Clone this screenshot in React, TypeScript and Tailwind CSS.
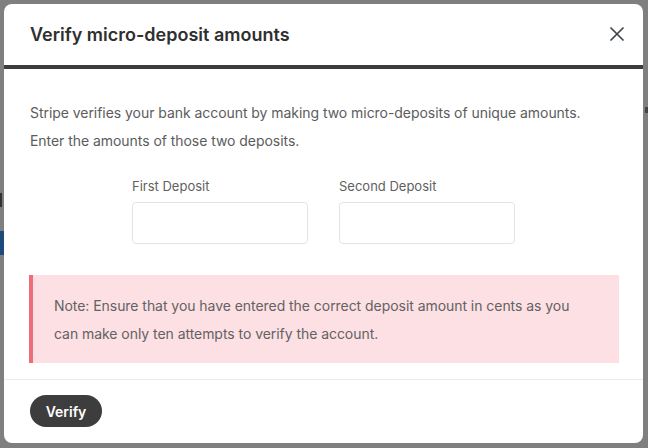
import React from "react";

export default function App() {
  return (
    <div
      className="relative w-[648px] h-[448px] bg-[#7f7f7f] overflow-hidden p-[4px]"
      style={{ fontFamily: "Inter, 'Noto Sans', sans-serif" }}
    >
      {/* underlying page bits peeking through */}
      <span className="absolute left-0 top-[193px] w-[2px] h-[14px] bg-[#333]" />
      <span className="absolute left-0 top-[231px] w-[4px] h-[24px] bg-[#1c4a7a]" />
      <span className="absolute right-0 top-[107px] w-[3px] h-[6px] bg-[#444]" />

      <div className="relative w-[639px] h-[439px] bg-white rounded-[8px] flex flex-col overflow-hidden">
        {/* header */}
        <div className="h-[61px] flex items-center justify-between pl-[26px] pr-[19px] pb-[1px]">
          <h2 className="text-[18px] font-semibold text-[#2f2f2f]">
            Verify micro-deposit amounts
          </h2>
          <button className="w-[14px] h-[14px] flex items-center justify-center">
            <svg width="14" height="14" viewBox="0 0 14 14" fill="none">
              <path d="M1 1L13 13M13 1L1 13" stroke="#3f4448" strokeWidth="1.7" strokeLinecap="round" />
            </svg>
          </button>
        </div>
        <div className="h-[4px] bg-[#3d3d3d]" />

        {/* body */}
        <div className="px-[26px] pt-[30px] pb-[16px]">
          <p className="text-[14px] leading-[28px] text-[#5c5c5c] tracking-[-0.05px]">
            Stripe verifies your bank account by making two micro-deposits of unique amounts.
            <br />
            Enter the amounts of those two deposits.
          </p>

          <div className="flex justify-center gap-[31px] mt-[21px]">
            <div className="flex flex-col">
              <label className="text-[13px] leading-[20px] text-[#5f5f5f]">First Deposit</label>
              <input className="mt-[6px] w-[176px] h-[42px] border border-[#e3e3e3] rounded-[4px] outline-none" />
            </div>
            <div className="flex flex-col">
              <label className="text-[13px] leading-[20px] text-[#5f5f5f]">Second Deposit</label>
              <input className="mt-[6px] w-[176px] h-[42px] border border-[#e3e3e3] rounded-[4px] outline-none" />
            </div>
          </div>

          <div className="mt-[31px] ml-[-1px] mr-[-2px] bg-[#fde0e4] border-l-[4px] border-[#ef6d7b] pl-[21px] pr-[20px] pt-[17px] pb-[15px]">
            <p className="text-[14px] leading-[28px] text-[#626262] tracking-[-0.05px]">
              Note: Ensure that you have entered the correct deposit amount in cents as you
              <br />
              can make only ten attempts to verify the account.
            </p>
          </div>
        </div>

        {/* footer */}
        <div className="border-t border-[#ebebeb] px-[26px] pt-[15px]">
          <button className="h-[32px] w-[72px] rounded-full bg-[#3d3d3d] text-white text-[14px] font-semibold">
            Verify
          </button>
        </div>
      </div>
    </div>
  );
}
